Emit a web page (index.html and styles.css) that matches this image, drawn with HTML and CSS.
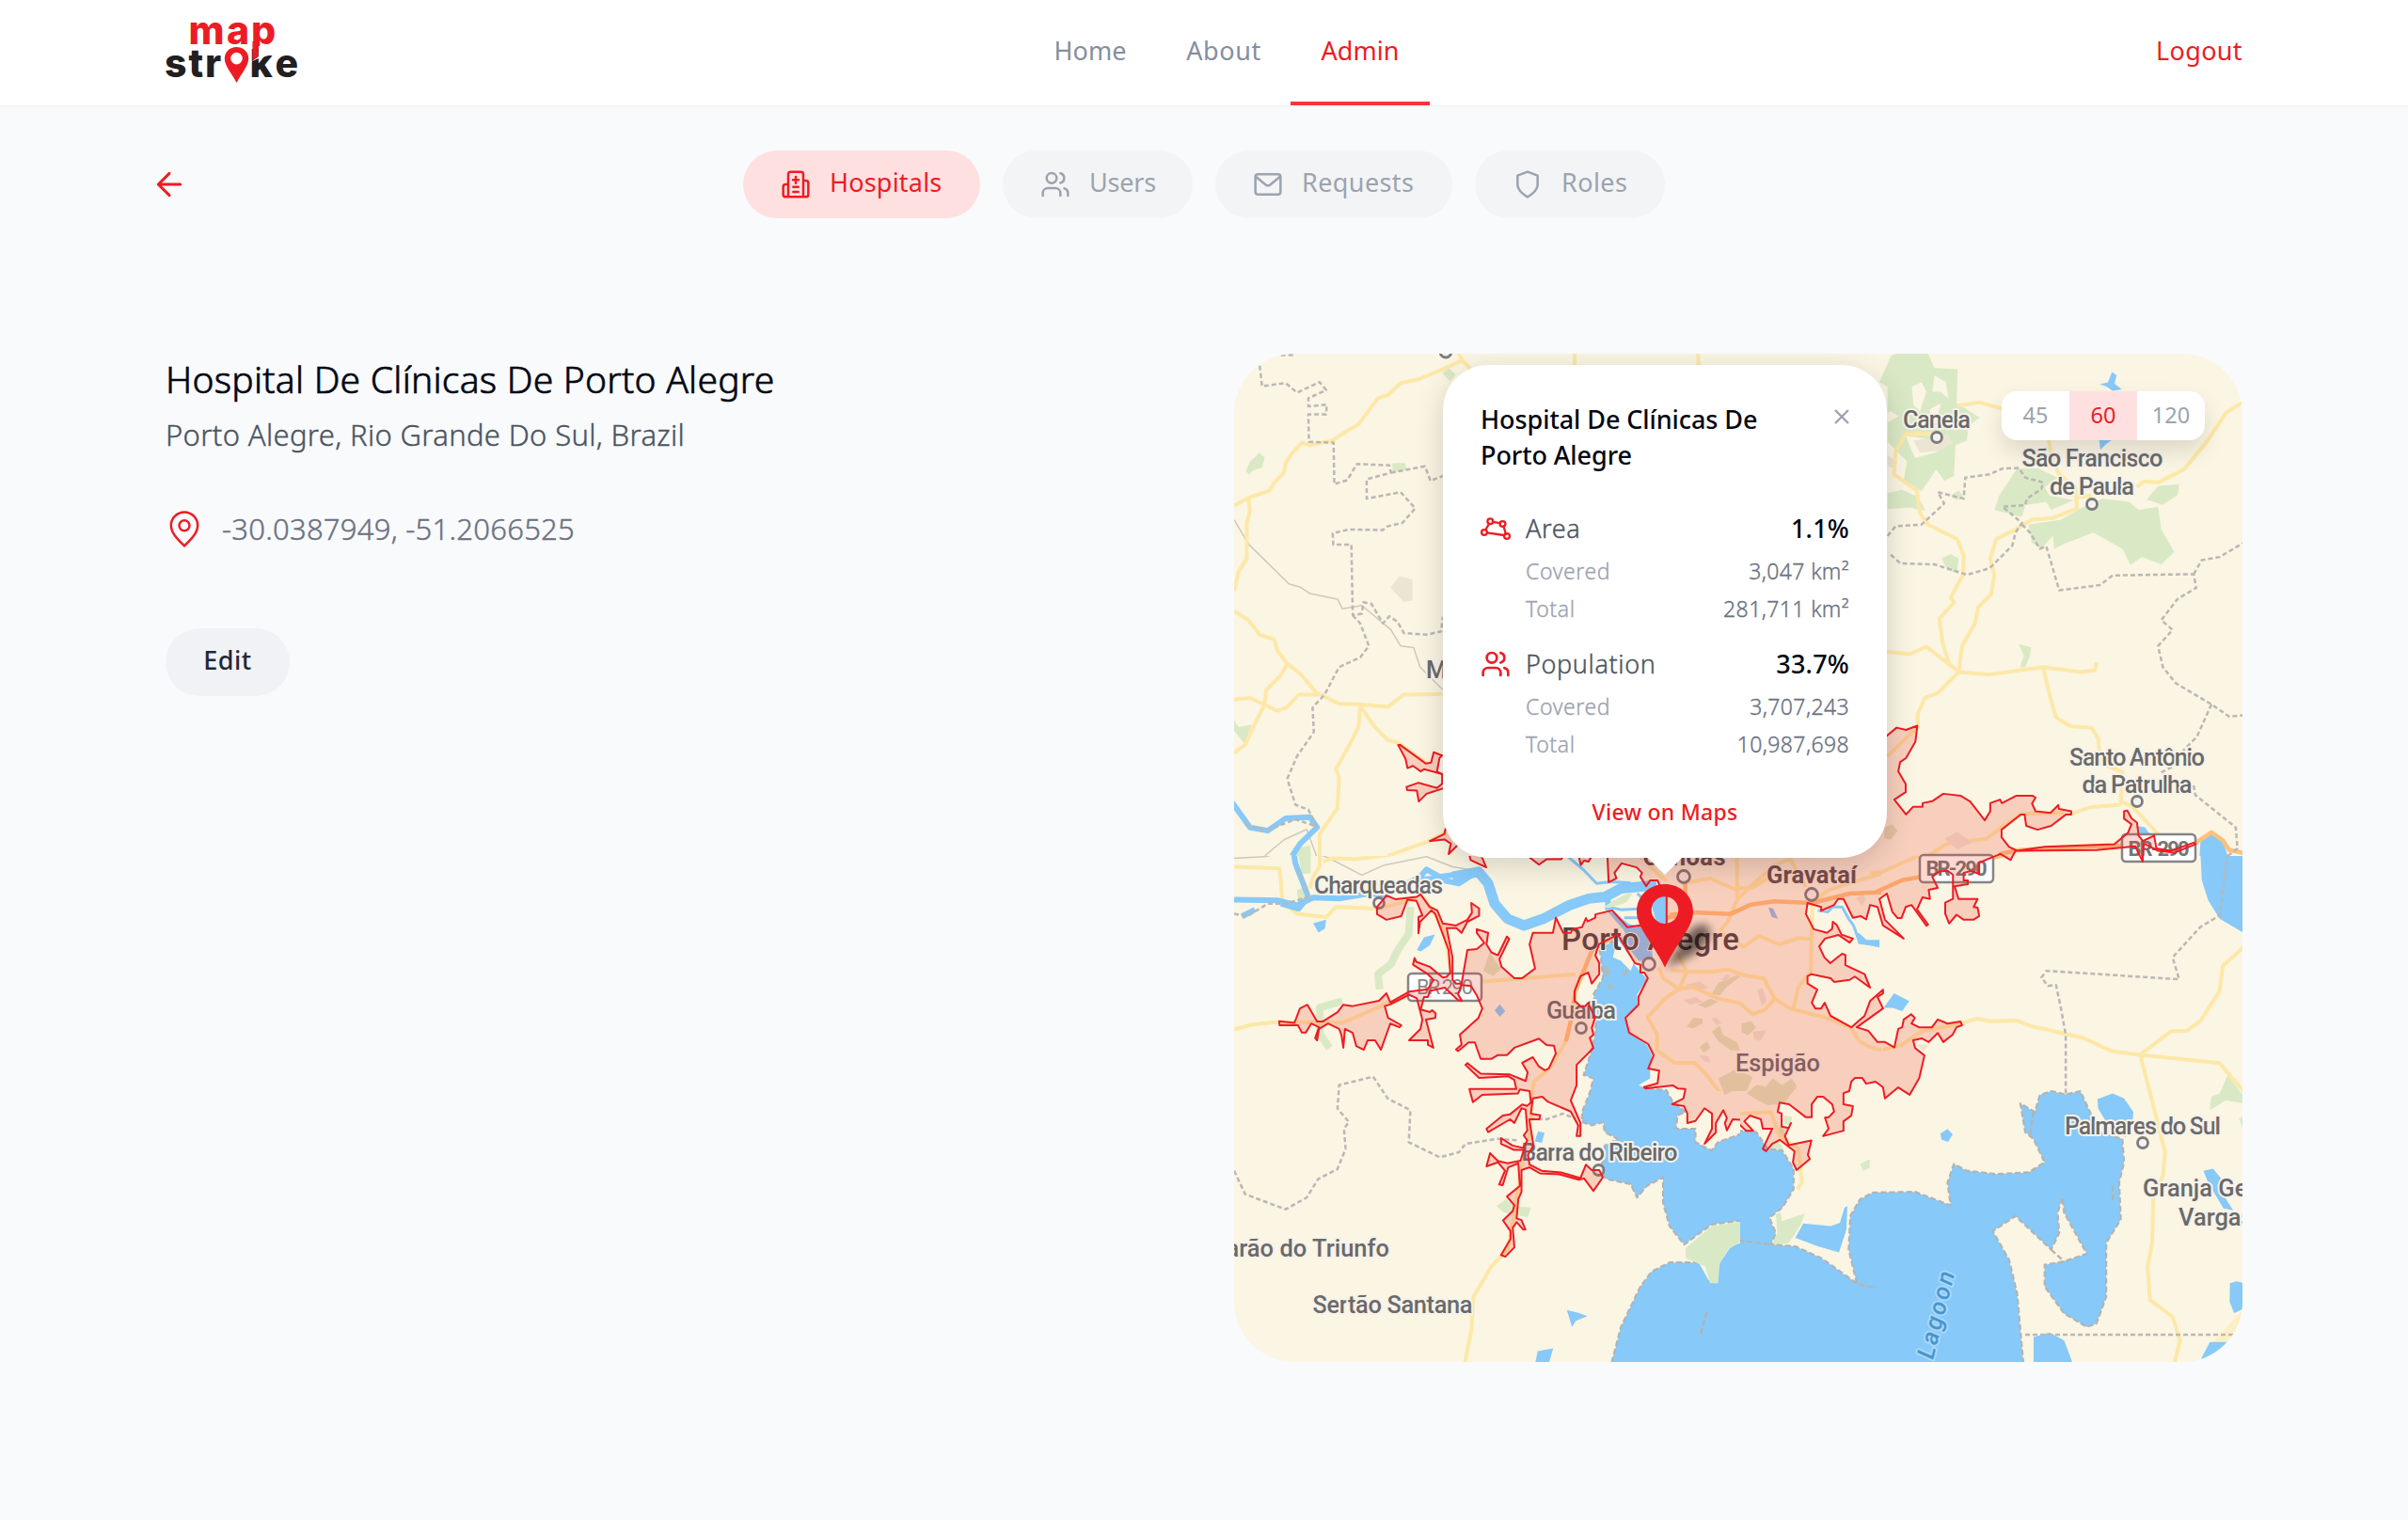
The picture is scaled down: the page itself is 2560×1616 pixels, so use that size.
FILE: index.html
```html
<!DOCTYPE html>
<html lang="en">
<head>
<meta charset="utf-8">
<title>Map Stroke</title>
<link rel="stylesheet" href="styles.css">
</head>
<body>
<header class="topbar">
  <svg class="logo" viewBox="176 20 140 72" role="img" aria-label="map stroke">
    <g class="logo-red"><text x="200.500 241 267" y="46.600">map</text></g>
    <g class="logo-dark"><text x="175 200.500 218" y="82.400">str</text><text x="265.500 292.500" y="82.400">ke</text></g>
    <path class="logo-cut" d="M267 65.500l8-5.500V49h14v9l-14 4z"/>
    <path class="logo-red" d="M268.500 44h6v16l-6 4z"/>
    <path class="logo-red" fill-rule="evenodd" d="M251.500 50c-7.200 0-12.700 5.400-12.700 12.200 0 8.300 8.700 17.300 12.700 25.800 4-8.500 12.700-17.500 12.700-25.800 0-6.800-5.500-12.200-12.700-12.200zm0 5.800a6.300 6.300 0 1 1 0 12.600 6.300 6.300 0 0 1 0-12.600z"/>
  </svg>
  <nav class="nav">
    <a class="nav-link nav-home">Home</a>
    <a class="nav-link nav-about">About</a>
    <a class="nav-link nav-admin active">Admin</a>
  </nav>
  <a class="logout">Logout</a>
</header>

<section class="subnav">
  <svg class="back" viewBox="0 0 24 24"><path d="M19 12H5M12 19l-7-7 7-7"/></svg>
  <div class="tabs">
    <a class="tab tab-wide active">
      <svg class="icon" viewBox="0 0 24 24"><path d="M6 22V4a2 2 0 0 1 2-2h8a2 2 0 0 1 2 2v18ZM6 12H4a2 2 0 0 0-2 2v6a2 2 0 0 0 2 2h2M18 9h2a2 2 0 0 1 2 2v9a2 2 0 0 1-2 2h-2M10 18h4M10 14h4M12 6v5M9.800 8.500h4.400"/></svg>
      <span class="tab-label">Hospitals</span></a>
    <a class="tab">
      <svg class="icon" viewBox="0 0 24 24"><path d="M16 21v-2a4 4 0 0 0-4-4H6a4 4 0 0 0-4 4v2M22 21v-2a4 4 0 0 0-3-3.870M16 3.130a4 4 0 0 1 0 7.750"/><circle cx="9" cy="7" r="4"/></svg>
      <span class="tab-label snug">Users</span></a>
    <a class="tab tab-wide">
      <svg class="icon" viewBox="0 0 24 24"><rect x="2" y="4" width="20" height="16" rx="2"/><path d="M2.500 6l8 6.500q1.500 1 3 0l8-6.500"/></svg>
      <span class="tab-label loose">Requests</span></a>
    <a class="tab">
      <svg class="icon" viewBox="0 0 24 24"><path d="M12 22s8-4 8-10V5l-8-3-8 3v7c0 6 8 10 8 10"/></svg>
      <span class="tab-label loose">Roles</span></a>
  </div>
</section>

<main class="content">
  <section class="details">
    <h1 class="name">Hospital De Clínicas De Porto Alegre</h1>
    <p class="place">Porto Alegre, Rio Grande Do Sul, Brazil</p>
    <p class="coords">
      <svg class="coords-pin" viewBox="0 0 24 24"><path d="M20.500 10c0 5.200-5.200 9.600-8.500 13C8.700 19.600 3.500 15.200 3.500 10a8.500 8.500 0 0 1 17 0Z"/><circle cx="12" cy="10" r="3.300"/></svg>
      <span>-30.0387949, -51.2066525</span>
    </p>
    <button class="edit">Edit</button>
  </section>

  <section class="map">
    <svg class="map-canvas" viewBox="0 0 1072 1072">
      <!-- terrain, north-west -->
      <svg x="-2" y="-6" width="540" height="540" viewBox="0 0 1568 1568" preserveAspectRatio="none">
        <path class="green" d="M42 380l12-28 30-28 16 14-8 32-28 8-12 12zM648 78l20-16 22 20-18 20zM494 356l38-2 8 22-44 8zM6 1150l14 20 40-8-22 60-32-40z"/>
        <path class="sand" d="M488 740l28-36 40 10 0 66-26 4z"/>
        <path class="green" d="M195 1568l12-26 34-6 2 32z"/>
        <path class="thin" d="M6 530L50 605 175 728 210 738 240 758 325 775 340 805 400 795 460 845 490 870 520 920 560 925 580 985 650 1055"/>
        <path class="thin" d="M100 1568l60-50 70-32 30 82"/>
        <path class="road" d="M6 487L50 462 115 440 130 415 160 385 165 355 185 325 215 292 240 300 310 285 340 265 390 235 450 155 480 145 520 108 580 95 640 70 710 38 735 65M710 38L695 10M50 465L55 500 45 540 45 650 20 690 6 750M6 812L50 840 85 885 130 900 140 935 170 975 210 1005 260 1065 330 1098 390 1100 480 1108 530 1070 650 1068M170 975L150 1010 105 1055 100 1100 60 1180 40 1225 6 1250M6 1085L55 1080 140 1120 170 1108 205 1070 285 1070M395 1105L390 1170 370 1210 320 1300 330 1325 325 1420 270 1500 270 1568M395 1105L440 1170 480 1210 510 1218 600 1280M480 1568L600 1525 660 1495M1057 10V60M1437 10L1440 60"/>
        <path class="river" d="M0 1403L55 1480 110 1490 165 1452 240 1448 262 1480 210 1530 185 1568"/>
        <path class="border" d="M85 55L92 118 165 108 200 138 270 105 290 130 235 155 235 180 292 175 290 205 235 205 237 290 313 292 315 420 355 408 385 358 485 362 490 385 415 405 415 465 520 445 565 495 525 540 480 550 465 562 360 560 310 572 312 607 368 607 372 825 400 820 405 785 430 790 465 850 485 828 510 845 530 880 600 885 645 875 650 830M490 385L595 365 612 410 650 395M372 825L395 850 422 920 395 955 330 985 285 1070 248 1110 252 1185 235 1210 200 1260 170 1330 195 1410 235 1425 262 1480M40 1470l65 20 90-35 60 20M150 22h40"/>
      </svg>
      <!-- terrain, north-east -->
      <svg x="538" y="-6" width="540" height="540" viewBox="0 0 1568 1568" preserveAspectRatio="none">
        <path class="green" fill-rule="evenodd" d="M465 25L500 10 580 17 600 62 672 65 668 170 740 215 705 240 700 285 665 300 660 395 630 410 605 375 560 442 505 410 515 350 455 290 455 230 490 210 455 190 455 120 430 105zM530 120l30-15 15 30-20 60-20-20zM600 85l35 20 8 50-25-20-25 0zM585 190l35-20-20 70zM510 270l60 10 40 40-70 20z"/>
        <path class="green" d="M855 372L920 372 980 400 940 430 955 455 1030 470 960 500 945 475 880 485 870 522 785 500 800 455zM890 545L990 530 1060 490 1120 465 1200 475 1230 500 1290 490 1300 560 1340 630 1300 668 1240 645 1205 670 1180 620 1090 570 1000 605 970 620 965 580 930 620 900 600zM1255 468l35-42 65-6-4 34-48 30zM455 448l45-10 50 22 22 42-50-10-67 5zM622 650l28-14 24 14-4 44-30-8zM860 914l38 10-4 28-14 34h-16l12-36zM455 170l28 15-28 15zM650 455l25-16 16 24-24 6z"/>
        <path class="sand" d="M535 285l60-8 45-12 15 30-40 22-60 6zM455 330l25 20-10 20-15-6z"/>
        <path class="water" d="M1110 112l25-6 13-32 14 10-6 26 22 18-28 4-20-14zM1108 280h44l-22 16-18 18zM1225 1475l25 5 25 35-45 5zM1418 1568L1422 1510 1455 1492 1490 1520 1505 1568z"/>
        <path class="road" d="M670 178L740 168 800 185 830 187M950 270L965 350 985 390 1035 430 1040 495 965 525 900 530 850 560 790 590 772 650 785 700 775 760 735 800 725 850 685 920 675 1000M610 265L510 265 480 320 475 390 545 440 555 510 580 545 670 590 690 640 688 700 650 770 660 785 615 835 625 910 645 975 675 1000M453 937L525 945 575 922 675 1000 770 1008 935 985 1050 1000 1095 995 1100 970M675 1000L610 1065 570 1080 548 1130 548 1170 455 1260M935 985L955 1070 975 1140 1020 1168 1085 1172 1105 1205 1112 1280 1180 1310 1175 1400 1210 1415 1290 1500M1550 168L1500 200 1440 290 1370 375 1290 415 1245 412 1225 430M1040 460L1085 455M1025 1437L1080 1418 1175 1410"/>
        <path class="road" d="M580 1568L640 1530 760 1515 800 1485 870 1438 1000 1435"/>
        <path class="highway" d="M800 1562L860 1550 1000 1542 1220 1535M1395 1535L1455 1495 1490 1520 1510 1550 1560 1560"/>
        <path class="border" d="M455 580L480 550 560 545 630 480 610 445 690 465 695 400 770 390 810 372 860 370 880 400 935 415 930 435 885 465 880 485 810 490 870 540 850 570 840 610 770 680 700 700 600 668 495 665 458 632M870 545L895 570 925 620 945 612 985 748 1110 732 1150 702 1400 698 1408 740 1350 775 1300 840 1335 870 1290 920 1305 985 1345 1035 1455 1100 1510 1138 1560 1133M1400 698L1425 655 1480 645 1560 598M1455 1100L1410 1200 1370 1240 1340 1290 1300 1310M1400 1350L1405 1380 1530 1480 1535 1545 1505 1568"/>
        <path class="moss" d="M445 1480l25-10 15 20-20 28-20-4z"/>
        <path class="pink" d="M630 1515l40-22 20 14 25 20-45 20z"/>
      </svg>
      <!-- terrain, south-west -->
      <svg x="-2" y="534" width="540" height="550" viewBox="0 28 1568 1540" preserveAspectRatio="none">
        <path class="green" d="M200 0h42v80l-28 2zM200 130l25-10 10 30-30 20zM815 1070l30-20 30 20 5 25-40-5zM880 1070l42 5-10 28-30-5z"/>
        <path class="stream" d="M550 180L545 260 510 310 490 350 450 380 455 425M340 460L270 480 272 560 300 600"/>
        <path class="moss" d="M775 370l20-55 35 50-25 20zM1500 690l60-30v60l-40 20z"/>
        <path class="thin" d="M6 35L100 30 150 20M260 20L300 35 400 85 470 55 600 30 680 60 740 70"/>
        <path class="road" d="M6 60L145 65 150 100 155 165 200 200 290 210 320 180 450 185 570 155M270 20L270 60 250 90 240 125M590 0L480 25 380 38 310 35 280 45M6 545L60 530 145 522 340 525 470 470 560 440 700 410 775 402 1060 380M1030 580L980 660 930 700 925 760 915 900 890 960 870 1100 850 1200 800 1250 745 1340 738 1440 718 1540M590 150L650 240 680 390"/>
        <path class="highway" d="M1255 235L1330 215 1400 200M1190 262L1110 310 1060 430 1045 520 1030 580"/>
        <path class="water" d="M1200 262L1135 310 1140 350 1145 390 1115 440 1125 490 1120 560 1105 620 1085 680 1115 690 1105 730 1080 790 1080 820 1110 830 1145 820 1150 850 1190 870 1150 890 1150 930 1130 960 1155 990 1230 1005 1250 1045 1280 1010 1330 985 1330 1060 1350 1130 1395 1185 1480 1125 1600 1110V845L1500 880 1480 905 1430 880 1430 840 1370 840 1375 800 1400 790 1360 760 1340 725 1275 720 1255 710 1290 690 1290 655 1295 620 1280 590 1225 555 1215 510 1250 480 1250 440 1280 395 1240 350zM1165 1560L1200 1430 1260 1310 1295 1265 1350 1238 1440 1238 1470 1290 1495 1300 1505 1240 1540 1190 1600 1170V1560z"/>
        <path class="water" d="M250 228l20-5 20-5-4 26-20 12zM570 308l22-38 34-8-16 32-28 18zM810 488l16-18 17 20-17 17zM934 878l10-30 20 4-8 30zM1033 1380l36 8 28 10-36 14-12 18zM935 1540l8-38 48-8-14 46zM1155 190l30 10 40 30 60 15 15 95h-45l-25-30-20-60zM1290 150l50-10v95l-30-5z"/>
        <path class="shore" d="M1200 262L1135 310 1140 350 1145 390 1115 440 1125 490 1120 560 1105 620 1085 680 1115 690 1105 730 1080 790 1080 820 1110 830 1145 820 1150 850 1190 870 1150 890 1150 930 1130 960 1155 990 1230 1005 1250 1045 1280 1010 1330 985 1330 1060 1350 1130 1395 1185 1480 1125 1600 1110M1600 845L1500 880 1480 905 1430 880 1430 840 1370 840 1375 800 1400 790 1360 760 1340 725 1275 720M1165 1560L1200 1430 1260 1310 1295 1265 1350 1238 1440 1238M1465 1385L1445 1455"/>
        <path class="green" d="M1400 1195L1480 1130 1600 1112V1160L1530 1200 1505 1240 1500 1300 1475 1300 1460 1250 1400 1225z"/>
        <path class="land" d="M1190 275l50 70-10 25-30-30-25-10zM1200 190l50 30-10 10-40-20z"/>
        <path class="isle" d="M1140 360l20-5 10 20-15 15zM1205 370l15-5 0 20-12 2zM1158 410l15-5 2 20-15 2z"/>
        <path class="river thick" d="M680 90L760 75 790 110 810 170 850 215 900 235 960 215 1040 175 1100 155 1150 150 1200 125 1310 115"/>
        <path class="river" d="M575 95L600 68 640 90 700 82M6 158L140 160 200 175 250 152 330 155 420 140 475 145 560 100 620 95 700 110 740 85M1160 150L1160 190"/>
        <path class="river" d="M190 20L195 50 215 100 235 150 205 185 150 170M30 208l40-20"/>
        <path class="creek" d="M1030 25L1085 70 1125 110 1170 105 1230 108M1160 180L1200 188 1280 184M1250 140L1300 180 1310 210M1210 212h70"/>
        <path class="green" d="M1145 182l30-20 50-25 10 5-20 25-50 15z"/>
        <path class="border" d="M6 965L40 1035 165 1080 230 1045 265 990 325 960 350 900 345 840 360 820 325 780 330 710 435 685 480 750 550 785 545 880 640 925 700 910 720 885 820 870 885 875M920 812L970 812 1020 795 1060 810M6 200L45 208 110 170 165 170 235 150 220 100 195 60"/>
      </svg>
      <!-- terrain, south-east -->
      <svg x="538" y="534" width="540" height="550" viewBox="0 28 1568 1540" preserveAspectRatio="none">
        <path class="moss" d="M20 735l30-25 30 5 20-25 30 20 30-20 15 25-40 50-50 5-30-15z"/>
        <path class="green" d="M110 1095L125 1090 130 1115 200 1092 185 1130 150 1180 95 1190 115 1150zM1505 680l15 20 32 40v25l-52-10-50 30 4-40 26-10zM370 945l30-14v26l-20 8zM135 800l25 5-5 25-20-5zM90 885l30-8 15 25-40 5zM1540 810l20-10v60z"/>
        <path class="moss" d="M110 840l20-6 15 30-5 20z"/>
        <path class="sand" d="M545 590l40 0-20 20z"/>
        <path class="beach" d="M1551 1380L1460 1475H1551z"/>
        <path class="road" d="M440 605L500 590 560 550 690 525 730 512 770 520 855 518 900 535 1060 570 1150 610 1235 620 1480 645 1560 735M400 80L440 75 520 40 620 0M0 795L95 790 120 860 180 900 190 1000 178 1020M1235 620L1330 550 1380 548 1420 520 1480 430 1490 355 1560 295M1235 620L1275 770 1312 910 1305 980 1275 1040 1272 1180 1258 1250 1265 1350 1335 1400 1358 1470 1340 1540"/>
        <path class="highway" d="M420 135L500 100 560 90 740 45 850 15 1220 5M1490 0L1510 18H1560"/>
        <path class="water" d="M-10 845L50 850 85 900 130 905 165 960 165 1020 130 1075 90 1105 110 1150 95 1185 170 1190 250 1225 360 1300 335 1200 340 1100 370 1050 410 1030 540 1028 600 1050 650 1068 640 1000 660 945 700 965 790 975 890 970 940 940 905 870 880 850 865 765 910 790 925 740 960 728 1005 738 1050 728 1080 790 1100 850 1180 870 1185 940 1170 1000 1175 1110 1130 1180 1130 1340 1100 1420 1070 1430 1000 1390 940 1310 940 1245 1000 1235 1070 1212 1000 1090 995 1045 980 1090 985 1150 960 1200 850 1100 780 1145 830 1230 855 1330 878 1580 -10 1580z"/>
        <path class="shore" d="M-10 845L50 850 85 900 130 905 165 960 165 1020 130 1075 90 1105 110 1150 95 1185 170 1190 250 1225 360 1300 420 1315M360 1300L335 1200 340 1100 370 1050 410 1030 540 1028 600 1050 650 1068 640 1000 660 945 700 965 790 975 890 970 940 940 905 870 880 850 865 765 910 790 925 740 960 728 1005 738 1050 728 1080 790 1100 850 1180 870 1185 940 1170 1000 1175 1110 1130 1180 1130 1340 1100 1420 1070 1430 1000 1390 940 1310 940 1245 1000 1235 1070 1212 1000 1090 995 1045 980 1090 985 1150 960 1200 850 1100 780 1145 830 1230 855 1330 878 1580M960 1200l40 35M-5 1172L95 1185M1150 1010v45M905 790l-10 70"/>
        <path class="water" d="M1103 752L1150 735 1185 750 1214 790 1210 830 1190 865 1130 820 1105 780zM618 855l22-14 16 16-14 22-20-6zM443 480L475 437 522 460 500 490 470 480zM1430 965l30-6 30 36 10 55 22 33-30-6-46-74zM1512 1300l20-6 25 6v75l-32 14-14-34zM906 1560V1460L955 1447 1000 1470 1035 1560zM1415 1540L1450 1475 1560 1475V1560zM1420 0L1425 100 1445 160 1480 215 1560 260V28L1540 10zM170 1165L195 1122 280 1130 308 1120 322 1075 331 1070 328 1140 305 1208 240 1190zM355 255l15 5 20 18h40v22l-30-5-35-5z"/>
        <path class="creek" d="M240 190L270 195 285 180 315 180 335 215 350 235 365 275"/>
        <path class="border" d="M1505 20L1480 205 1420 240 1335 330 1355 395 945 370 930 390 950 415 975 412 990 480 1005 560 1005 735M880 1453L1530 1453"/>
      </svg>
      <!-- city streets east of the hospital -->
      <svg x="428" y="532" width="260" height="252" viewBox="0 24 780 756" preserveAspectRatio="none">
        <path class="moss" d="M240 470l20-35 60-25 10 5-45 35-20 25zM195 505l40-20 25 10-40 20zM160 575l20-30 30 5v15l-30 15zM240 590l25-20 10 30 45 25 10 25h-30l-40-30zM335 565l30-8 15 20-25 25-20-10zM200 640l25-18 10 20-20 15zM265 745l65-28 40 18-20 45h-60zM215 25l40 5-20 20z"/>
        <path class="pink" d="M155 440l45-10 30 20-35 10zM370 590l45-5-20 35-20-5zM385 460l15-10 15 40-15 20zM150 490l40-10 20 15-40 10zM200 665l30 5 5 20-20-5zM700 165l20-12 12 15-15 20zM240 550l15-5 15 20-15 5zM270 425l15-18 15 5-15 15z"/>
        <path class="pool" d="M420 195l15 2 16 33-20-5z"/>
        <path class="road" d="M70 385L85 420 135 455 180 448 260 485 330 500 370 535 410 520 440 485 405 420 340 410 290 392 240 400 160 400 110 395M135 455L160 400 130 340M135 455L90 485 35 545 65 600 65 650 120 690 185 690 220 725 270 790M440 485L490 517 600 545 680 575 710 620 740 638 790 652M500 517L515 450 555 400 560 180M265 270L340 320 390 285 455 312 515 292 555 295M160 115L235 102 310 135 370 130 430 95M320 20V170L290 240 265 270M320 170L365 125 440 60 490 40M560 180L610 140 700 110 790 85M490 40L540 130M0 20L60 80 95 110"/>
        <path class="highway" d="M105 218L180 210 300 215 365 185 440 175 560 180 680 150 790 145M155 115V215"/>
      </svg>

      <!-- place names -->
      <g class="dots">
        <circle cx="225" cy="-2" r="6"/><circle cx="747" cy="89" r="5.500"/><circle cx="912" cy="160" r="5.500"/><circle cx="960" cy="476" r="5.500"/>
        <circle cx="154" cy="584" r="5.500"/><circle cx="614" cy="575" r="6.500"/><circle cx="478" cy="556" r="6.500"/><circle cx="441" cy="649" r="6.500"/>
        <circle cx="369" cy="717" r="5.500"/><circle cx="387.500" cy="868" r="5.500"/><circle cx="966" cy="839" r="5.500"/>
      </g>
      <g class="shields">
        <rect x="944" y="511" width="78" height="29" rx="4"/><rect x="729" y="533" width="78" height="29" rx="4"/><rect x="185" y="659" width="78" height="29" rx="4"/>
      </g>
      <g class="shield-text">
        <text x="983" y="534" textLength="65">BR-290</text><text x="768" y="555" textLength="65">BR-290</text><text class="faint" x="224" y="681" textLength="60">BR 290</text>
      </g>
      <g class="labels">
        <text x="747" y="78.500" textLength="72">Canela</text>
        <text x="912.500" y="119.500" textLength="150">São Francisco</text>
        <text x="912" y="149.500" textLength="90">de Paula</text>
        <text x="960" y="437.500" textLength="144">Santo Antônio</text>
        <text x="960" y="466.500" textLength="117">da Patrulha</text>
        <text x="153.500" y="574" textLength="137">Charqueadas</text>
        <text x="369" y="707" textLength="74">Guaíba</text>
        <text x="578" y="763" textLength="90">Espigão</text>
        <text x="388.500" y="858" textLength="166">Barra do Ribeiro</text>
        <text x="966" y="829.500" textLength="166">Palmares do Sul</text>
        <text class="start" x="966" y="896">Granja Ge</text>
        <text class="start" x="1004" y="927">Vargas</text>
        <text class="end" x="165" y="960">arão do Triunfo</text>
        <text x="168.500" y="1020" textLength="170">Sertão Santana</text>
        <text class="start" x="204" y="345">M</text>
        <text class="town" x="614" y="563" textLength="96">Gravataí</text>
        <text class="town" x="478.500" y="544" textLength="88">Canoas</text>
        <text class="city" x="442.500" y="634" textLength="189">Porto Alegre</text>
        <text class="lagoon" transform="translate(743 1070) rotate(-76)" textLength="95">Lagoon</text>
      </g>

      <!-- 60 minute coverage -->
      <svg x="-2" y="-6" width="540" height="540" viewBox="0 0 1568 1568" preserveAspectRatio="none">
        <path class="zone" d="M512 1225L535 1268 541 1297 558 1290 582 1307 592 1300 650 1316 632 1308 640 1265 648 1258 622 1248 614 1280 598 1283 518 1225zM538 1355L575 1342 632 1358 648 1345 648 1316 700 1316 700 1350 650 1360 600 1376 576 1400 570 1366 540 1365zM658 1485L655 1500 610 1522 655 1517 675 1530 668 1562 692 1538 740 1500z"/>
      </svg>
      <svg x="538" y="-6" width="540" height="540" viewBox="0 0 1568 1568" preserveAspectRatio="none">
        <path class="zone" d="M-20 1600L-20 1197 453 1197 483 1172 512 1179 547 1166 541 1215 512 1266 494 1278 488 1307 511 1346 511 1371 476 1394 512 1440 534 1416 563 1416 563 1405 593 1399 627 1376 680 1382 710 1400 755 1458 772 1430 772 1405 802 1394 808 1405 853 1382 902 1382 912 1388 901 1406 912 1430 958 1435 982 1411 984 1423 1022 1430 1022 1440 1006 1440 960 1475 918 1487 883 1475 878 1440 866 1440 807 1487 807 1510 830 1540 855 1552 940 1540 1155 1532 1197 1497 1208 1470 1185 1453 1185 1430 1195 1428 1208 1452 1225 1465 1230 1505 1243 1522 1278 1505 1285 1545 1330 1552 1400 1527 1406 1532 1340 1558 1290 1552 1246 1530 1243 1590 1220 1538 1100 1550 850 1552 835 1580 803 1562 740 1590z"/>
      </svg>
      <svg x="-2" y="534" width="540" height="550" viewBox="0 28 1568 1540" preserveAspectRatio="none">
        <path class="zone" d="M1600 815L1545 812 1527 845 1521 823 1527 808 1516 785 1493 823 1493 851 1458 885 1481 840 1481 795 1458 779 1430 817 1405 823 1405 795 1395 773 1358 767 1393 750 1399 722 1375 720 1360 711 1275 720 1271 716 1313 705 1318 667 1284 661 1301 621 1284 588 1225 554 1214 510 1254 471 1254 448 1283 392 1272 375 1260 375 1260 352 1243 347 1190 262 1132 291 1121 324 1133 347 1133 380 1110 408 1099 375 1075 386 1057 430 1057 459 1075 475 1090 475 1099 465 1120 510 1110 540 1115 560 1104 570 1115 600 1063 650 1063 711 1045 756 1075 823 1075 862 1063 862 1068 830 1045 789 975 760 957 745 928 750 922 795 951 800 948 812 917 812 930 890 913 918 918 947 955 965 1015 970 1075 987 1092 947 1110 963 1133 963 1144 985 1115 1025 1086 988 1070 992 1010 976 950 973 918 955 893 963 893 1028 883 1050 878 1107 893 1112 905 1140 898 1140 878 1118 866 1135 871 1193 843 1221 830 1216 859 1168 859 1145 836 1113 866 1085 871 1068 848 1042 888 1010 883 943 852 955 835 1008 824 1006 842 965 820 940 785 952 796 913 820 936 850 943 890 935 900 903 870 903 830 885 830 868 865 890 898 897 911 875 900 860 911 845 906 783 893 779 871 823 858 812 790 850 785 840 835 801 858 797 895 768 910 772 922 762 918 728 888 723 882 735 772 739 743 761 732 722 877 722 871 695 853 684 762 689 720 650 726 645 767 676 855 678 906 698 912 672 895 644 928 627 947 655 965 666 977 661 999 616 993 593 970 591 947 572 871 599 848 621 819 621 801 632 767 632 749 583 730 583 697 609 691 604 708 590 703 560 760 510 772 482 755 443 737 415 708 412 697 440 709 459 697 457 656 420 610 430 604 448 592 448 582 485 610 493 617 487 628 497 627 510 598 515 621 599 604 590 604 577 546 577 581 543 587 515 570 452 546 441 488 470 471 475 481 510 522 532 516 538 488 527 459 605 441 577 418 577 406 605 383 594 372 555 348 543 343 599 337 560 330 543 296 527 268 543 262 577 256 570 268 538 244 527 227 554 215 554 203 532 146 532 145 520 192 525 209 482 232 471 262 521 279 521 325 493 343 471 372 475 453 459 476 437 488 464 546 432 581 428 604 425 621 397 604 380 558 352 563 332 568 343 610 358 650 390 662 388 673 375 668 308 627 201 615 190 580 224 575 258 575 210 587 205 569 162 541 158 522 207 476 218 447 201 447 180 476 146 505 157 570 150 581 142 610 180 633 190 650 229 691 235 726 218 740 197 738 168 762 184 762 206 726 224 708 257 692 243 662 243 680 330 680 397 691 408 708 408 726 308 755 305 778 287 755 257 755 246 790 257 785 291 800 315 820 324 848 268 855 275 825 335 831 358 871 392 895 392 935 363 918 291 928 257 990 257 999 212 1022 257 1045 257 1050 246 1080 240 1092 213 1097 223 1121 212 1121 202 1173 190 1220 240 1255 235 1290 240 1341 232 1341 130 1318 113 1313 101 1290 101 1278 118 1260 90 1265 78 1248 62 1202 50 1180 78 1186 95 1162 106 1157 0 1600 0z"/>
        <path class="zone" d="M665 0L668 22 695 0zM732 25L736 40 784 62 770 30 745 20zM915 30L947 54 970 38 1015 38 1030 20zM1068 20L1076 55 1086 42 1100 45 1115 20z"/>
      </svg>
      <svg x="538" y="534" width="540" height="550" viewBox="0 28 1568 1540" preserveAspectRatio="none">
        <path class="zone" d="M-20 0L855 0 835 40 803 22 738 48 738 82 715 73 690 78 690 101 703 101 703 112 662 118 674 156 733 156 721 180 733 182 738 207 720 218 690 218 668 203 645 229 633 200 633 167 657 156 657 84 640 72 615 74 593 90 610 123 582 129 586 156 563 151 546 187 580 232 575 236 529 174 511 180 498 213 486 213 470 195 453 140 430 156 447 218 505 274 441 235 424 180 401 174 389 217 372 207 348 212 319 156 302 156 290 174 250 191 250 180 208 168 203 201 227 246 268 257 284 245 286 224 298 233 313 262 348 274 338 286 303 263 262 274 244 297 260 330 278 347 315 319 325 323 325 353 384 380 401 420 354 387 338 397 290 403 279 392 220 380 208 386 208 408 238 426 221 465 232 482 250 482 261 465 279 504 343 538 384 504 401 460 441 426 441 437 424 448 441 482 360 538 396 549 424 582 447 582 476 598 488 543 500 538 505 515 528 499 539 510 529 527 552 538 592 538 610 515 640 527 680 521 685 532 668 538 656 560 627 582 610 555 582 582 560 571 534 577 540 600 569 622 553 689 523 739 488 717 447 750 441 717 418 700 389 706 377 689 354 689 343 700 337 728 319 734 319 767 348 773 343 801 319 818 319 846 256 862 273 840 262 807 273 806 290 789 284 767 256 745 238 745 221 767 221 806 203 806 151 767 122 762 116 790 128 795 128 834 150 838 157 823 138 862 150 889 220 875 209 918 215 930 174 963 163 940 168 907 122 873 99 885 80 907 70 900 99 840 70 840 64 812 30 801 13 818 40 846 18 846 -20 810zM1220 0L1243 45 1243 0z"/>
      </svg>
    </svg>

    <svg class="marker" viewBox="0 0 120 90">
      <path class="marker-shadow" d="M30 88L56 50q10-10 18-6t0 18q-12 16-44 26z"/>
      <path class="marker-pin" fill-rule="evenodd" d="M30 0C13.500 0 0 12.500 0 29c0 17 17 33 30 59.500C43 62 60 46 60 29 60 12.500 46.500 0 30 0zm0 13.300a14.300 14.300 0 1 1 0 28.600 14.300 14.300 0 0 1 0-28.600z"/>
    </svg>

    <div class="range">
      <span class="range-item">45</span><span class="range-item active">60</span><span class="range-item">120</span>
    </div>

    <article class="popup">
      <svg class="close" viewBox="0 0 16 16"><path d="M1 1l14 14M15 1L1 15"/></svg>
      <h2 class="popup-title">Hospital De Clínicas De<br>Porto Alegre</h2>
      <div class="metric">
        <svg class="metric-icon" viewBox="0 0 32 32"><path d="M9 11L5.500 17M13 8.800L20.500 10.200M24.500 13.500L27 22M7 20.300L24.500 23"/><circle cx="10.300" cy="8.200" r="2.900"/><circle cx="23.500" cy="11" r="2.900"/><circle cx="4" cy="20" r="2.900"/><circle cx="28" cy="24" r="2.900"/></svg>
        <span class="metric-name">Area</span><strong class="metric-share">1.1%</strong>
      </div>
      <dl class="figures">
        <div class="figure"><dt>Covered</dt><dd>3,047 km²</dd></div>
        <div class="figure"><dt>Total</dt><dd>281,711 km²</dd></div>
      </dl>
      <div class="metric">
        <svg class="metric-icon people" viewBox="0 0 24 24"><path d="M16 21v-2a4 4 0 0 0-4-4H6a4 4 0 0 0-4 4v2M22 21v-2a4 4 0 0 0-3-3.870M16 3.130a4 4 0 0 1 0 7.750"/><circle cx="9" cy="7" r="4"/></svg>
        <span class="metric-name">Population</span><strong class="metric-share">33.7%</strong>
      </div>
      <dl class="figures">
        <div class="figure"><dt>Covered</dt><dd>3,707,243</dd></div>
        <div class="figure"><dt>Total</dt><dd>10,987,698</dd></div>
      </dl>
      <a class="popup-link">View on Maps</a>
    </article>
  </section>
</main>
</body>
</html>
```
FILE: styles.css
```css
* { box-sizing: border-box; }
body {
  margin: 0;
  min-height: 1616px;
  background: #f9fafc;
  color: #030712;
  font-family: "Noto Sans", "Open Sans", sans-serif;
  font-size: 27px;
}
h1, h2, p, dl, dd { margin: 0; }
svg { display: block; overflow: hidden; }
path, circle, rect { vector-effect: non-scaling-stroke; }

.topbar {
  display: flex;
  justify-content: space-between;
  height: 114px;
  padding: 0 176px;
  background: #fff;
  border-bottom: 2px solid #f3f4f6;
}
.logo { width: 140px; height: 72px; margin-top: 20px; overflow: visible; }
.logo text { font: 800 41px Inter, "Liberation Sans", sans-serif; }
.logo-red { fill: #ed1c24; }
.logo-dark { fill: #231f20; }
.logo-cut { fill: #fff; }
.nav { display: flex; height: 112px; }
.nav-link {
  display: flex;
  justify-content: center;
  height: 112px;
  line-height: 108px;
  color: #868e9e;
}
.nav-home { width: 142px; }
.nav-about { width: 142px; letter-spacing: .6px; }
.nav-admin { width: 148px; }
.nav-link.active { color: #ed1c24; border-bottom: 4px solid #fe3239; }
.logout { width: 92px; line-height: 108px; letter-spacing: .35px; color: #ed1c24; white-space: nowrap; }

.subnav {
  display: grid;
  grid-template-columns: 614px 1fr;
  height: 118px;
  padding: 46px 176px 0;
}
.back { width: 40px; height: 40px; margin: 16px 0 0 -16px; fill: none; stroke: #ed1c24; stroke-width: 3; stroke-linecap: round; stroke-linejoin: round; }
.tabs { display: flex; gap: 24px; }
.tab {
  display: flex;
  align-items: center;
  gap: 20px;
  width: 202px;
  height: 72px;
  padding: 0 0 0 40px;
  border-radius: 36px;
  background: #f3f4f6;
  color: #9ca3af;
  white-space: nowrap;
}
.tab-wide { width: 252px; }
.tab-label { padding-bottom: 5px; letter-spacing: .2px; }
.tab-label.snug { letter-spacing: -.2px; }
.tab-label.loose { letter-spacing: .4px; }
.tab.active { background: #ffe0e1; color: #ed1c24; }
.icon { width: 32px; height: 32px; fill: none; stroke: currentColor; stroke-width: 2.5; stroke-linecap: round; stroke-linejoin: round; }

.content { display: grid; grid-template-columns: 1fr 1072px; padding: 144px 176px 0; }
.details { padding-top: 3px; white-space: nowrap; font-weight: 300; -webkit-text-stroke: .4px; }
.name { font-size: 39px; line-height: 48px; font-weight: 300; letter-spacing: .25px; -webkit-text-stroke: .7px; }
.place { margin-top: 15px; font-size: 31px; line-height: 40px; letter-spacing: .34px; color: #4b5563; }
.coords { display: flex; gap: 20px; margin-top: 60px; font-size: 31px; line-height: 41px; height: 40px; letter-spacing: .26px; color: #6b7280; }
.coords-pin { width: 40px; height: 40px; fill: none; stroke: #ed1c24; stroke-width: 2.5; }
.edit {
  width: 132px;
  height: 72px;
  margin-top: 86px;
  padding: 0 0 6px;
  border: 0;
  border-radius: 36px;
  background: #f1f2f6;
  color: #1f2937;
  font: 500 27px "Noto Sans", "Open Sans", sans-serif;
  letter-spacing: .5px;
  -webkit-text-stroke: 0;
}

.map { position: relative; height: 1072px; border-radius: 64px; overflow: hidden; background: #fbf5e3; }
.map-canvas { width: 1072px; height: 1072px; }
.land { fill: #fbf5e3; }
.water { fill: #87c9f9; }
.pool { fill: #9cbbe8; }
.green { fill: #dae9c5; }
.moss { fill: #dfe3bd; }
.pink { fill: #efe3d3; }
.sand { fill: #ece5d3; }
.beach { fill: #fbf0c5; }
.isle { fill: #a9bdc6; }
.road, .highway, .thin, .river, .creek, .border, .shore, .stream { fill: none; stroke-linejoin: round; }
.road { stroke: #fde8a8; stroke-width: 4; }
.highway { stroke: #ffc07c; stroke-width: 4.5; }
.thin { stroke: #cdc9be; stroke-width: 1.5; }
.river { stroke: #87c9f9; stroke-width: 6; }
.river.thick { stroke-width: 11; }
.creek { stroke: #87c9f9; stroke-width: 3; }
.stream { stroke: #dae9c5; stroke-width: 8; }
.border { stroke: #b9b8b5; stroke-width: 2.5; stroke-dasharray: 5 3; }
.shore { stroke: #b3b3b0; stroke-width: 2.2; stroke-dasharray: 6 3; }
.zone { fill: rgba(240, 56, 36, .2); stroke: #ed1c24; stroke-width: 2; stroke-linejoin: round; }

.dots circle { fill: #f4f2ee; stroke: #7c7c7c; stroke-width: 2.8; }
.shields rect { fill: #fff; stroke: #858585; stroke-width: 2.5; }
.shield-text text { font: 700 22px Roboto, sans-serif; fill: #757575; text-anchor: middle; }
.shield-text .faint { font-weight: 400; fill: #8a8a8a; }
.labels text {
  font: 500 25.5px Roboto, sans-serif;
  fill: #6a6a6a;
  stroke: #f6f2ea;
  stroke-width: 4px;
  stroke-linejoin: round;
  paint-order: stroke;
  text-anchor: middle;
}
.labels .start { text-anchor: start; }
.labels .end { text-anchor: end; }
.labels .town { font-weight: 700; fill: #5b5050; stroke-width: 2px; }
.labels .city { font-size: 33px; fill: #4c4344; stroke-width: 2px; }
.labels .lagoon { font-style: italic; fill: #4796cf; stroke: #a9d7f8; text-anchor: start; }

.marker { position: absolute; left: 428px; top: 564px; width: 120px; height: 90px; overflow: visible; }
.marker-pin { fill: #ed1c24; }
.marker-shadow { fill: #000; opacity: .55; filter: blur(5px); }

.range {
  position: absolute;
  top: 40px;
  right: 40px;
  display: flex;
  width: 216px;
  height: 52px;
  border-radius: 16px;
  overflow: hidden;
  background: #fff;
  box-shadow: 0 12px 24px rgba(0, 0, 0, .12);
}
.range-item { flex: 1; font-size: 23.5px; line-height: 51px; text-align: center; color: #9ca3af; }
.range-item.active { background: #ffe0e1; color: #ed1c24; }

.popup {
  position: absolute;
  left: 222px;
  top: 12px;
  width: 472px;
  height: 524px;
  padding: 39px 40px 0;
  border-radius: 48px;
  background: #fff;
  box-shadow: 0 8px 32px rgba(0, 0, 0, .16);
  white-space: nowrap;
}
.popup::after {
  content: "";
  position: absolute;
  left: 217px;
  top: 523px;
  border: 19px solid transparent;
  border-top-color: #fff;
  border-bottom: 0;
}
.close { position: absolute; right: 40px; top: 47px; width: 16px; height: 16px; fill: none; stroke: #9ca3af; stroke-width: 2.4; }
.popup-title { font-size: 27px; line-height: 38px; font-weight: 500; letter-spacing: -.08px; }
.metric { display: flex; align-items: center; height: 40px; margin-top: 39px; line-height: 40px; }
.figures + .metric { margin-top: 19px; }
.metric-icon { width: 32px; height: 32px; margin-right: 16px; fill: none; stroke: #ed1c24; stroke-width: 2.3; stroke-linecap: round; }
.metric-icon.people { stroke-width: 2.7; }
.metric-name { flex: 1; font-weight: 300; letter-spacing: .6px; color: #4b5563; -webkit-text-stroke: .4px; }
.metric-share { font-weight: 500; letter-spacing: .2px; }
.figures { margin: 5px 0 0 48px; font-size: 23px; line-height: 40px; font-weight: 300; letter-spacing: .38px; -webkit-text-stroke: .35px; }
.figure { display: flex; justify-content: space-between; }
.figure dt { color: #9ca3af; letter-spacing: .6px; }
.figure dd { color: #6b7280; }
.popup-link { display: block; margin-top: 32px; font-size: 23px; line-height: 40px; font-weight: 500; letter-spacing: .25px; text-align: center; color: #ed1c24; }
```
